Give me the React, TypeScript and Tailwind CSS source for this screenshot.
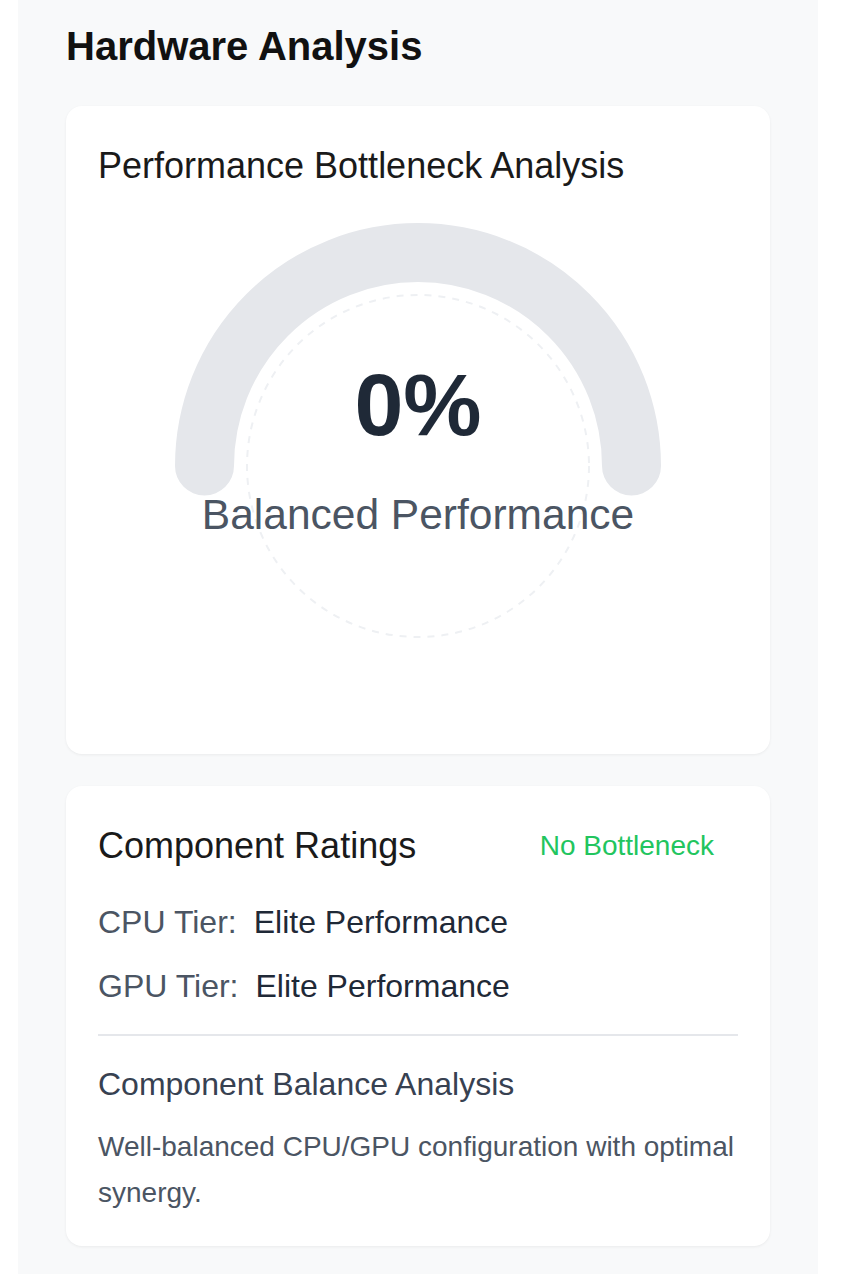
import React from "react";

export default function App() {
  const cx = 320;
  const cy = 272;
  const r = 213.5;
  return (
    <div
      className="min-h-[1274px] bg-white pl-[18px]"
      style={{ fontFamily: '"Liberation Sans", Arial, Helvetica, sans-serif' }}
    >
      <div className="w-[800px] min-h-[1274px] bg-[#f8f9fa] px-[48px] pt-[18px] pb-[28px]">
        <h1 className="text-[40px] leading-[56px] font-bold text-[#111111] mb-[32px]">
          Hardware Analysis
        </h1>

        <div className="bg-white rounded-2xl shadow-[0_1px_3px_rgba(0,0,0,0.06)] p-[32px]">
          <h2 className="text-[36px] leading-[56px] text-[#1a1a1a]">
            Performance Bottleneck Analysis
          </h2>
          <div className="relative h-[528px]">
            <svg
              className="absolute inset-0"
              width="640"
              height="528"
              viewBox="0 0 640 528"
            >
              <path
                d={`M ${cx - r} ${cy} A ${r} ${r} 0 0 1 ${cx + r} ${cy}`}
                fill="none"
                stroke="#e5e7eb"
                strokeWidth="59"
                strokeLinecap="round"
              />
              <circle
                cx={cx}
                cy={cy}
                r="171"
                fill="none"
                stroke="#eef0f3"
                strokeWidth="2"
                strokeDasharray="7 7"
              />
            </svg>
            <div className="absolute left-0 right-0 top-[167px] flex flex-col items-center">
              <div className="text-[88px] leading-none font-bold text-[#1f2937]">
                0%
              </div>
              <div className="mt-[36px] text-[42.5px] leading-[60px] text-[#4b5563]">
                Balanced Performance
              </div>
            </div>
          </div>
        </div>

        <div className="mt-[32px] bg-white rounded-2xl shadow-[0_1px_3px_rgba(0,0,0,0.06)] px-[32px] pt-[32px] pb-[30px]">
          <div className="flex items-center justify-between">
            <h3 className="text-[36px] leading-[56px] text-[#1a1a1a]">
              Component Ratings
            </h3>
            <span className="pr-[24px] text-[28px] leading-[40px] text-[#22c55e]">
              No Bottleneck
            </span>
          </div>
          <div className="mt-[24px] flex flex-col gap-[16px]">
            <div className="flex gap-[17px] text-[32px] leading-[48px]">
              <span className="text-[#4b5563]">CPU Tier:</span>
              <span className="text-[#1f2937]">Elite Performance</span>
            </div>
            <div className="flex gap-[17px] text-[32px] leading-[48px]">
              <span className="text-[#4b5563]">GPU Tier:</span>
              <span className="text-[#1f2937]">Elite Performance</span>
            </div>
          </div>
          <div className="mt-[24px] border-t-2 border-[#e5e7eb] pt-[24px]">
            <h4 className="text-[32px] leading-[48px] text-[#374151]">
              Component Balance Analysis
            </h4>
            <p className="mt-[16px] text-[28px] leading-[46px] text-[#4b5563]">
              Well-balanced CPU/GPU configuration with optimal synergy.
            </p>
          </div>
        </div>
      </div>
    </div>
  );
}
